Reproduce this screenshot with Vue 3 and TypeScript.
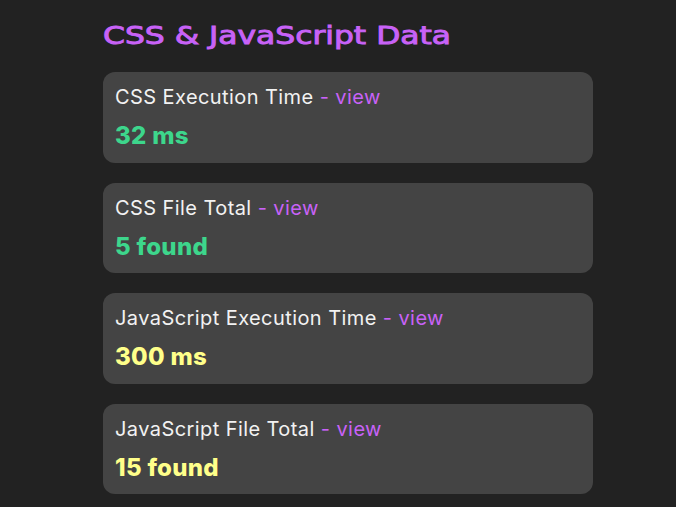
<script setup lang="ts">
interface Metric {
  label: string
  value: string
  tone: 'good' | 'warn'
}

const metrics: Metric[] = [
  { label: 'CSS Execution Time', value: '32 ms', tone: 'good' },
  { label: 'CSS File Total', value: '5 found', tone: 'good' },
  { label: 'JavaScript Execution Time', value: '300 ms', tone: 'warn' },
  { label: 'JavaScript File Total', value: '15 found', tone: 'warn' },
]
</script>

<template>
  <main class="page">
    <h2 class="heading">CSS &amp; JavaScript Data</h2>
    <section v-for="m in metrics" :key="m.label" class="card">
      <p class="label">{{ m.label }} <a class="view">- view</a></p>
      <p class="value" :class="m.tone">{{ m.value }}</p>
    </section>
  </main>
</template>

<style>
html,
body {
  background: #222222;
}
</style>

<style scoped>
.page {
  width: 490px;
  margin-left: 103px;
  padding-top: 21px;
  display: flex;
  flex-direction: column;
  gap: 20px;
  font-family: Inter, "Open Sans", sans-serif;
}
.heading {
  width: fit-content;
  margin: 0 0 -1px;
  height: 32px;
  line-height: 30px;
  font-family: "DejaVu Sans", sans-serif;
  font-size: 24px;
  font-weight: 400;
  color: #c862f7;
  -webkit-text-stroke: 0.9px #c862f7;
  white-space: nowrap;
  transform: scaleX(1.306);
  transform-origin: left center;
}
.card {
  height: 90.5px;
  box-sizing: border-box;
  padding: 12px 12px;
  background: #444444;
  border-radius: 12px;
}
.label {
  margin: 0;
  font-size: 20px;
  line-height: 26px;
  letter-spacing: 0.42px;
  color: #f2f2f2;
  white-space: nowrap;
}
.view {
  color: #c862f7;
}
.value {
  margin: 12px 0 0;
  font-size: 24px;
  line-height: 28px;
  font-weight: 800;
  letter-spacing: 0.3px;
}
.good {
  color: #3dd68c;
}
.warn {
  color: #ffff8a;
}
</style>
